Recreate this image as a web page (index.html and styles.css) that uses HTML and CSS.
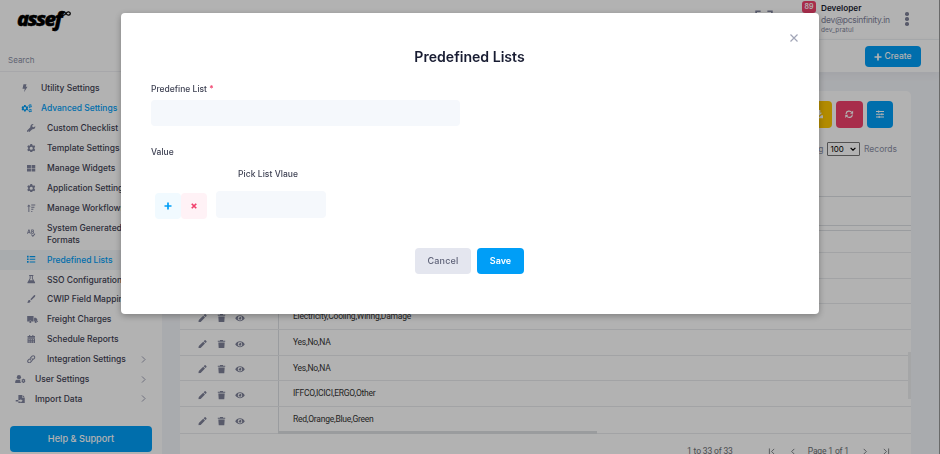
FILE: index.html
```html
<!DOCTYPE html>
<html lang="en">
<head>
<meta charset="utf-8">
<title>Predefined Lists</title>
<link rel="stylesheet" href="styles.css">
</head>
<body>
<svg class="sprite" aria-hidden="true">
  <symbol id="bolt" viewBox="0 0 16 16"><path d="M5 0h6L9.500 5H13L6 16l1.500-7H3z"/></symbol>
  <symbol id="gear" viewBox="0 0 16 16"><path fill-rule="evenodd" d="M6.300 0h3.400l.5 2.300 1.400.8 2.200-.7 1.700 2.900L13.800 7v2l1.700 1.700-1.700 2.900-2.200-.7-1.400.8-.5 2.300H6.300l-.5-2.300-1.400-.8-2.200.7-1.700-2.900L2.200 9V7L.5 5.300l1.700-2.900 2.200.7 1.400-.8zM8 5a3 3 0 1 0 0 6 3 3 0 0 0 0-6z"/></symbol>
  <symbol id="gears" viewBox="0 0 20 16"><path fill-rule="evenodd" d="M5 2h3l.4 2 1.200.6 1.800-.6 1.400 2.400L11.400 8l1.400 1.600-1.400 2.400-1.800-.6-1.200.6-.4 2H5l-.4-2-1.200-.6-1.800.6L.2 9.600 1.600 8 .2 6.400 1.600 4l1.800.6L4.600 4zM6.500 5.800a2.200 2.200 0 1 0 0 4.400 2.200 2.200 0 0 0 0-4.400zM15 0l1.500 1L18 .3l1 1.500-.5 1.500 1.200 1.200-1 1.700-1.700-.1-1 1.200-2-.8V4.800l-1-1.300.8-1.600H15zm1.200 2.300a1.300 1.300 0 1 0 0 2.600 1.300 1.300 0 0 0 0-2.600zM15 8.700l1.500 1L18 9l1 1.500-.5 1.500 1.200 1.200-1 1.700-1.700-.1-1 1.200-2-.8v-1.700l-1-1.300.8-1.600H15zm1.200 2.300a1.300 1.300 0 1 0 0 2.600 1.300 1.300 0 0 0 0-2.600z"/></symbol>
  <symbol id="wrench" viewBox="0 0 16 16"><path fill-rule="evenodd" d="M15.700 3.600 13 6.200l-2.700-.5-.5-2.700L12.400.3C9.500-.6 6 1.600 6.300 6L.7 11.800a2.300 2.300 0 0 0 3.400 3.500L10 9.700c4 .4 6.700-2.700 5.700-6.100zM2.400 12.600a1 1 0 1 1 0 2 1 1 0 0 1 0-2z"/></symbol>
  <symbol id="widgets" viewBox="0 0 16 16"><path d="M0 2h7.400v5.500H0zM8.600 2H16v5.500H8.600zM0 8.600h7.400V14H0zM8.600 8.600H16V14H8.600z"/></symbol>
  <symbol id="flow" viewBox="0 0 16 16"><path d="M3.500 1 6.800 4.800H4.400V15H2.600V4.800H.2zM8 1h8v2H8zM8 5h6v2H8zM8 9h4v2H8zM8 13h2v2H8z"/></symbol>
  <symbol id="spell" viewBox="0 0 16 16"><path fill-rule="evenodd" d="M2.600 1h2L7.200 9H5.400L5 7.500H2.300L1.800 9H0zm1 2L2.800 6h1.700zM8 1h3c2.500 0 2.600 2.800 1.200 3.700C14 5.500 13.700 9 11 9H8zm1.700 1.500V4H11c.8 0 .8-1.500 0-1.500zm0 3v2H11c1 0 1-2 0-2zM7.500 11 9 9.800l2 2.200L14.700 8 16 9.300 11 15z"/></symbol>
  <symbol id="list" viewBox="0 0 16 16"><path d="M0 1.500h3v3H0zM5 2h11v2H5zM0 6.500h3v3H0zM5 7h11v2H5zM0 11.500h3v3H0zM5 12h11v2H5z"/></symbol>
  <symbol id="flask" viewBox="0 0 16 16"><path fill-rule="evenodd" d="M4 0h8v2h-1v4.500l4 7c.8 1.500 0 2.500-1.300 2.500H2.300C1 16 .2 15 1 13.500l4-7V2H4zm2.800 2v5L5 10h6L9.200 7V2z"/></symbol>
  <symbol id="brush" viewBox="0 0 16 16"><path d="M15.700.3c.8.8 0 2-.7 3L8 10 6.300 8.200 12.700 1c1-.8 2.200-1.500 3-.7zM5 9.500 6.800 11.300c0 2.700-2.800 4-6.500 3.700 1-.7 1-1.200 1.300-2.700.4-2 2-2.800 3.400-2.800z"/></symbol>
  <symbol id="truck" viewBox="0 0 20 16"><path d="M0 2h12v10H8.200a2.500 2.500 0 0 0-4.600 0H0zM13 5h3.500L19 8v3.500h1V13h-1.500a2.500 2.500 0 0 0-4.800-.6L13 12z"/><circle cx="5.900" cy="13" r="2"/><circle cx="16" cy="13" r="2"/></symbol>
  <symbol id="calendar" viewBox="0 0 16 16"><path fill-rule="evenodd" d="M4 0h2v2h4V0h2v2h3v3H1V2h3zM1 6h14v10H1zm2 2v2h2V8zm4 0v2h2V8zm4 0v2h2V8zm-8 4v2h2v-2zm4 0v2h2v-2zm4 0v2h2v-2z"/></symbol>
  <symbol id="link" viewBox="0 0 16 16"><path fill="none" stroke="currentColor" stroke-width="2" stroke-linecap="round" d="M6.600 9.400c-1.200-1.200-1.200-3 0-4.200l3-3c2.800-2.500 6.800 1.500 4.200 4.200l-1.500 1.500M9.400 6.600c1.200 1.200 1.200 3 0 4.200l-3 3C3.600 16.300-.4 12.300 2.200 9.600l1.500-1.500"/></symbol>
  <symbol id="usercog" viewBox="0 0 20 16"><circle cx="7" cy="4" r="4"/><path d="M0 16v-3c0-3 2-4 4-4h6c-1 3 0 5 2 7z"/><path fill-rule="evenodd" d="M14.500 7h2l.4 1.200 1.300-.4 1 1.700-.9 1.500.9 1.500-1 1.700-1.300-.4-.4 1.200h-2l-.4-1.200-1.300.4-1-1.700.9-1.500-.9-1.500 1-1.700 1.300.4zm1 2.700a1.300 1.300 0 1 0 0 2.600 1.300 1.300 0 0 0 0-2.600z"/></symbol>
  <symbol id="import" viewBox="0 0 18 16"><path fill-rule="evenodd" d="M5 0h7v5h5v11H5v-4h4v2l4-3.200L9 7.500v2H5zm8 0 4 4h-4zM0 9.500h5V12H0z"/></symbol>
  <symbol id="chev" viewBox="0 0 16 16"><path fill="none" stroke="currentColor" stroke-width="1.800" d="m4.500 1 7 7-7 7"/></symbol>
  <symbol id="pencil" viewBox="0 0 16 16"><path d="M11.800.8c.8-.8 1.400-.8 2.200 0L15.200 2c.8.800.8 1.400 0 2.200L13.600 5.800 10.200 2.400zM9.300 3.300l3.400 3.400L4.500 15 .3 15.700 1 11.500z"/></symbol>
  <symbol id="trash" viewBox="0 0 16 16"><path d="M5.500 0h5l.7 1.200H15v2H1v-2h3.800zM2 4.500h12L13.200 16H2.800z"/></symbol>
  <symbol id="eye" viewBox="0 0 18 16"><path fill-rule="evenodd" d="M9 2.500c4 0 7 2.500 9 5.500-2 3-5 5.500-9 5.500S2 11 0 8c2-3 5-5.500 9-5.500zm0 1.300a4.200 4.200 0 1 0 0 8.400 4.200 4.200 0 0 0 0-8.400zm0 1.600a2.600 2.600 0 1 1-2.500 2c1 .6 2-.4 1.500-1.700z"/></symbol>
  <symbol id="refresh" viewBox="0 0 16 16"><path fill="none" stroke="currentColor" stroke-width="2.200" d="M2 7.500C2.300 1.500 9.500.3 13 4.700M14 8.500c-.3 6-7.500 7.200-11 2.800"/><path d="M15.500 1v6h-6zM.5 15V9h6z"/></symbol>
  <symbol id="sliders" viewBox="0 0 16 16"><path d="M0 2h16v1.800H0zM0 7.100h16v1.800H0zM0 12.200h16V14H0zM4 1h2v4H4zM10 6h2v4h-2zM5 11h2v4H5z"/></symbol>
  <symbol id="download" viewBox="0 0 16 16"><path d="M6 0h4v5h3.500L8 10.500 2.500 5H6zM0 10h4l4 3 4-3h4v6H0z"/></symbol>
  <symbol id="plus" viewBox="0 0 16 16"><path d="M6.300 1h3.400v5.300H15v3.400H9.700V15H6.300V9.700H1V6.300h5.300z"/></symbol>
  <symbol id="cross" viewBox="0 0 16 16"><path fill="none" stroke="currentColor" stroke-width="4.600" d="m2 2 12 12M14 2 2 14"/></symbol>
  <symbol id="close" viewBox="0 0 16 16"><path fill="none" stroke="currentColor" stroke-width="2.400" d="m1 1 14 14M15 1 1 15"/></symbol>
  <symbol id="first" viewBox="0 0 16 16"><path fill="none" stroke="currentColor" stroke-width="1.900" d="M2 1v14M13 2 7 8l6 6"/></symbol>
  <symbol id="prev" viewBox="0 0 16 16"><path fill="none" stroke="currentColor" stroke-width="2" d="M11 2 5 8l6 6"/></symbol>
</svg>

<div class="app">
  <aside class="sidebar">
    <div class="brand"><span class="brand-name">assef</span><svg class="infinity" viewBox="0 0 20 10"><path d="M10 5C7 0 1.500 1 1.500 5S7 10 10 5s8.500-4 8.500 0S13 10 10 5z"/></svg></div>
    <div class="search">Search</div>
    <nav class="nav">
      <a class="item top"><svg><use href="#bolt"/></svg><span>Utility Settings</span></a>
      <a class="item top on"><svg class="wide"><use href="#gears"/></svg><span>Advanced Settings</span></a>
      <a class="item"><svg><use href="#wrench"/></svg><span>Custom Checklist</span></a>
      <a class="item"><svg><use href="#gear"/></svg><span>Template Settings</span></a>
      <a class="item"><svg><use href="#widgets"/></svg><span>Manage Widgets</span></a>
      <a class="item"><svg><use href="#gear"/></svg><span>Application Settings</span></a>
      <a class="item"><svg><use href="#flow"/></svg><span>Manage Workflows</span></a>
      <a class="item double"><svg><use href="#spell"/></svg><span>System Generated<br>Formats</span></a>
      <a class="item on current"><svg><use href="#list"/></svg><span>Predefined Lists</span></a>
      <a class="item"><svg><use href="#flask"/></svg><span>SSO Configuration</span></a>
      <a class="item"><svg><use href="#brush"/></svg><span>CWIP Field Mapping</span></a>
      <a class="item"><svg class="wide"><use href="#truck"/></svg><span>Freight Charges</span></a>
      <a class="item"><svg><use href="#calendar"/></svg><span>Schedule Reports</span></a>
      <a class="item"><svg><use href="#link"/></svg><span>Integration Settings</span><svg class="chev"><use href="#chev"/></svg></a>
      <a class="item root"><svg class="wide"><use href="#usercog"/></svg><span>User Settings</span><svg class="chev"><use href="#chev"/></svg></a>
      <a class="item root"><svg class="wide"><use href="#import"/></svg><span>Import Data</span><svg class="chev"><use href="#chev"/></svg></a>
    </nav>
    <div class="help">Help &amp; Support</div>
  </aside>

  <main class="main">
    <header class="header">
      <svg class="expand" viewBox="0 0 16 14"><path d="M1 5V1h4M11 1h4v4M15 9v4h-4M5 13H1V9"/></svg>
      <span class="count">89</span>
      <div class="user"><b>Developer</b><span class="mail">dev@pcsinfinity.in</span><span class="login">dev_pratul</span></div>
      <div class="dots"><i></i><i></i><i></i></div>
    </header>
    <div class="toolbar"><div class="create"><svg><use href="#plus"/></svg><span>Create</span></div></div>
    <section class="card">
      <div class="tools">
        <div class="tool yellow"><svg><use href="#download"/></svg></div>
        <div class="tool red"><svg><use href="#refresh"/></svg></div>
        <div class="tool blue"><svg><use href="#sliders"/></svg></div>
      </div>
      <div class="showing"><span>Showing</span><div class="select"><span>100</span><svg viewBox="0 0 10 6"><path d="m1 1 4 4 4-4"/></svg></div><span>Records</span></div>
      <div class="thead"></div>
      <div class="filler"></div>
      <div class="rows">
        <div class="row"><div class="acts"></div><div class="cell"></div></div>
        <div class="row"><div class="acts"></div><div class="cell"></div></div>
        <div class="row"><div class="acts"></div><div class="cell"></div></div>
        <div class="row"><div class="acts"><svg><use href="#pencil"/></svg><svg><use href="#trash"/></svg><svg><use href="#eye"/></svg></div><div class="cell">Electricity,Cooling,Wiring,Damage</div></div>
        <div class="row"><div class="acts"><svg><use href="#pencil"/></svg><svg><use href="#trash"/></svg><svg><use href="#eye"/></svg></div><div class="cell">Yes,No,NA</div></div>
        <div class="row"><div class="acts"><svg><use href="#pencil"/></svg><svg><use href="#trash"/></svg><svg><use href="#eye"/></svg></div><div class="cell">Yes,No,NA</div></div>
        <div class="row"><div class="acts"><svg><use href="#pencil"/></svg><svg><use href="#trash"/></svg><svg><use href="#eye"/></svg></div><div class="cell">IFFCO,ICICI,ERGO,Other</div></div>
        <div class="row"><div class="acts"><svg><use href="#pencil"/></svg><svg><use href="#trash"/></svg><svg><use href="#eye"/></svg></div><div class="cell">Red,Orange,Blue,Green</div></div>
        <div class="vthumb"></div>
        <div class="hthumb"></div>
      </div>
      <div class="pager"><span class="range">1 to 33 of 33</span><svg><use href="#first"/></svg><svg><use href="#prev"/></svg><span class="page">Page 1 of 1</span><svg class="flip"><use href="#prev"/></svg><svg class="flip"><use href="#first"/></svg></div>
    </section>
  </main>
</div>

<div class="overlay">
  <div class="modal">
    <svg class="close"><use href="#close"/></svg>
    <h1>Predefined Lists</h1>
    <div class="label"><span>Predefine List</span> <em>*</em></div>
    <div class="input"></div>
    <div class="label value">Value</div>
    <div class="colhead">Pick List Vlaue</div>
    <div class="entry">
      <div class="mini add"><svg><use href="#plus"/></svg></div>
      <div class="mini del"><svg><use href="#cross"/></svg></div>
      <div class="input small"></div>
    </div>
    <div class="buttons"><div class="btn cancel">Cancel</div><div class="btn save">Save</div></div>
  </div>
</div>
</body>
</html>
```
FILE: styles.css
```css
* { box-sizing: border-box; }
body { margin: 0; width: 940px; height: 454px; overflow: hidden; font-family: Inter, sans-serif; font-size: 8.5px; color: #3f4254; }
svg { fill: currentColor; flex: none; display: block; }
.sprite { position: absolute; width: 0; height: 0; }
.app { display: flex; height: 454px; background: #f3f5f9; }

/* sidebar */
.sidebar { width: 162px; height: 454px; background: #fff; flex: none; overflow: hidden; }
.brand { height: 40px; padding: 5px 0 0 17px; display: flex; color: #000; }
.brand-name { font: italic 800 20px/27px "Open Sans", sans-serif; letter-spacing: -1.6px; -webkit-text-stroke: .4px #000; }
.infinity { width: 10px; height: 5px; margin: 6px 0 0 0; fill: none; stroke: #000; stroke-width: 2.6; }
.search { height: 32px; padding: 14px 0 0 8px; line-height: 13px; font-size: 8px; color: #8b8fa5; border-bottom: 1px solid #eff0f4; }
.nav { padding-top: 6.500px; }
.item { display: flex; align-items: center; height: 19.900px; padding-left: 27px; font-weight: 500; white-space: nowrap; }
.item svg { width: 8.500px; height: 8.500px; color: #8286a0; margin-right: 11.500px; }
.item svg.wide { width: 11px; margin-right: 9px; }
.item.top { padding-left: 20.500px; }
.item.top svg { width: 8px; margin-right: 12.500px; }
.item.top svg.wide { width: 11.500px; margin-right: 9px; }
.item.root { padding-left: 15px; }
.item span { line-height: 12px; letter-spacing: -.02px; }
.item.double { height: 32px; }
.item.on, .item.on svg { color: #009ef7; }
.item.current { background: #f3f6f9; }
.item svg.chev { width: 7px; height: 7px; margin: 0 15px 0 auto; }
.help { margin: 17px 10px 0; height: 26px; border-radius: 4px; background: #009ef7; color: #fff; font-size: 9.200px; font-weight: 500; line-height: 26px; text-align: center; }

/* header */
.main { flex: 1; min-width: 0; border-right: 1px solid #999; }
.header { height: 40px; background: #fff; border-bottom: 1px solid #eff2f5; display: flex; justify-content: flex-end; align-items: flex-start; padding-right: 30px; }
.expand { width: 18px; height: 16px; margin: 10px 29px 0 0; fill: none; stroke: #8286a0; stroke-width: 1.500; }
.count { width: 14px; height: 12px; margin: 1px 5px 0 0; border-radius: 3px; background: #f1416c; color: #fff; font-size: 7px; font-weight: 600; line-height: 12px; text-align: center; }
.user { width: 84px; display: flex; flex-direction: column; white-space: nowrap; color: #7e8299; }
.user b { font-weight: 600; font-size: 8.200px; line-height: 11px; margin-top: 3px; color: #181c32; }
.mail { font-size: 8.500px; line-height: 12px; letter-spacing: -.28px; }
.login { font-size: 6.500px; line-height: 8px; letter-spacing: .1px; }
.dots { display: flex; flex-direction: column; gap: 1.500px; margin-top: 12px; width: 4px; }
.dots i { width: 3.500px; height: 3.500px; border-radius: 50%; background: #7e8299; }
.toolbar { height: 32px; background: #fff; padding: 6px 18px 0 0; display: flex; justify-content: flex-end; box-shadow: 0 3px 8px rgba(50, 50, 90, .06); }
.create { width: 56px; height: 21px; border-radius: 4px; background: #009ef7; color: #fff; font-weight: 500; line-height: 19px; display: flex; align-items: center; justify-content: center; gap: 2px; }
.create svg { width: 8px; height: 8px; }

/* records */
.card { margin: 19px 28px 0 18px; height: 380px; background: #fff; border-radius: 5px 5px 0 0; padding-top: 10px; }
.tools { display: flex; justify-content: flex-end; gap: 4px; padding-right: 18px; height: 40px; }
.tool { width: 26.500px; height: 26.500px; border-radius: 4px; color: #fff; display: flex; align-items: center; justify-content: center; }
.tool svg { width: 8.500px; height: 8.500px; }
.yellow { background: #ffc700; }
.red { background: #f1416c; }
.blue { background: #009ef7; }
.showing { display: flex; justify-content: flex-end; align-items: center; gap: 4px; height: 16px; padding-right: 14px; color: #8b8fa5; }
.select { width: 32.500px; height: 14.500px; border: 1px solid #767676; border-radius: 1px; color: #000; display: flex; align-items: center; justify-content: space-between; padding: 0 3px 0 2px; font-size: 8px; }
.select svg { width: 6px; height: 4px; fill: none; stroke: #000; stroke-width: 2; }
.thead { margin-top: 39px; height: 30px; border: solid #dde0e4; border-width: 1px 0; }
.filler { height: 5px; border-bottom: 1px solid #dde0e4; }
.rows { position: relative; height: 203px; display: grid; grid-template-rows: 22px 25.700px 25.700px 25.700px 25.700px 25.700px 25.700px 26.800px; }
.row { display: flex; border-bottom: 1px solid #e8eaed; }
.acts { width: 99px; border-right: 1px solid #dde0e4; display: flex; align-items: center; gap: 10px; padding: 3px 0 0 18px; color: #7e8299; }
.acts svg { width: 9px; height: 8.500px; }
.acts svg:last-child { width: 10px; margin-left: -1px; }
.cell { padding-left: 14px; font: 8.500px/25px Roboto, sans-serif; letter-spacing: -.24px; color: #333; }
.vthumb { position: absolute; right: 0; top: 121px; width: 3px; height: 47px; background: #eceeef; }
.hthumb { position: absolute; left: 98px; bottom: 0; width: 319px; height: 3px; background: #dde0e3; }
.pager { display: flex; align-items: center; height: 34px; padding-right: 21px; justify-content: flex-end; font: 8.500px/7px Roboto, sans-serif; letter-spacing: -.15px; color: #6b6d72; }
.pager svg { width: 8px; height: 7px; }
.range { margin-right: 35px; }
.pager svg + svg { margin-left: 13px; }
.page { margin: 0 12px 0 11px; }
.flip { transform: scaleX(-1); }

/* dialog */
.overlay { position: fixed; inset: 0; background: rgba(0, 0, 0, .3); }
.modal { position: relative; width: 698px; height: 301.500px; margin: 12.500px 0 0 121px; padding: 34px 30px 0; border-radius: 4px; background: #fff; box-shadow: 0 2px 7px rgba(0, 0, 0, .3); font-weight: 500; }
.close { position: absolute; top: 21px; right: 21px; width: 8px; height: 8px; color: #a1a5b7; }
h1 { margin: 0 1px 0 0; font-size: 14.100px; font-weight: 600; line-height: 20px; text-align: center; color: #181c32; }
.label { margin-top: 16px; height: 12px; line-height: 12px; }
.label em { font-style: normal; color: #f1416c; }
.input { width: 309px; height: 26.500px; margin-top: 5px; border-radius: 4px; background: #f5f8fc; }
.label.value { margin-top: 20px; }
.colhead { margin: 10px 0 0 87px; line-height: 12px; letter-spacing: .05px; }
.entry { display: flex; margin: 11px 0 0 4px; }
.mini { width: 26px; height: 26px; margin-top: 2px; border-radius: 4px; display: flex; align-items: center; justify-content: center; }
.mini svg { width: 8px; height: 8px; }
.add { background: #f1faff; color: #009ef7; }
.del { background: #fff2f6; color: #f1416c; }
.del svg { width: 6px; height: 6px; }
.input.small { width: 110px; margin: 0 0 0 9px; }
.buttons { display: flex; justify-content: center; gap: 6px; margin: 29px 1px 0 0; }
.btn { height: 26px; border-radius: 4px; line-height: 26px; text-align: center; font-size: 9px; }
.cancel { width: 56px; background: #e4e6ef; color: #5e6278; letter-spacing: .15px; }
.save { width: 47px; background: #009ef7; color: #fff; font-weight: 600; }
```
